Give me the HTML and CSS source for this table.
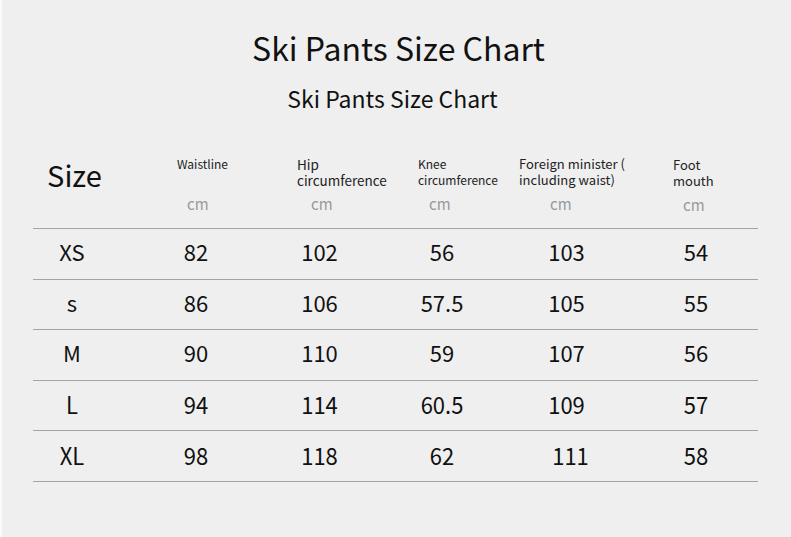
FILE: index.html
```html
<!DOCTYPE html>
<html>
<head>
<meta charset="utf-8">
<link rel="stylesheet" href="styles.css">
</head>
<body>
<div class="page">
  <h1 class="title">Ski Pants Size Chart</h1>
  <h2 class="subtitle">Ski Pants Size Chart</h2>
  <div class="chart">
    <div class="row head">
      <div class="cell size-head">Size</div>
      <div class="cell h h2"><div class="label"><span class="ln">Waistline</span></div><span class="unit">cm</span></div>
      <div class="cell h h3"><div class="label"><span class="ln">Hip</span><span class="ln">circumference</span></div><span class="unit">cm</span></div>
      <div class="cell h h4"><div class="label"><span class="ln">Knee</span><span class="ln">circumference</span></div><span class="unit">cm</span></div>
      <div class="cell h h5"><div class="label"><span class="ln">Foreign minister (</span><span class="ln">including waist)</span></div><span class="unit">cm</span></div>
      <div class="cell h h6"><div class="label"><span class="ln">Foot</span><span class="ln">mouth</span></div><span class="unit">cm</span></div>
    </div>
    <div class="row">
      <div class="cell sz">XS</div><div class="cell">82</div><div class="cell">102</div><div class="cell">56</div><div class="cell">103</div><div class="cell c6">54</div>
    </div>
    <div class="row">
      <div class="cell sz">s</div><div class="cell">86</div><div class="cell">106</div><div class="cell">57.5</div><div class="cell">105</div><div class="cell c6">55</div>
    </div>
    <div class="row">
      <div class="cell sz">M</div><div class="cell">90</div><div class="cell">110</div><div class="cell">59</div><div class="cell">107</div><div class="cell c6">56</div>
    </div>
    <div class="row narrow">
      <div class="cell sz">L</div><div class="cell">94</div><div class="cell">114</div><div class="cell">60.5</div><div class="cell">109</div><div class="cell c6">57</div>
    </div>
    <div class="row narrow">
      <div class="cell sz">XL</div><div class="cell">98</div><div class="cell">118</div><div class="cell">62</div><div class="cell c5">111</div><div class="cell c6">58</div>
    </div>
  </div>
</div>
</body>
</html>
```

FILE: styles.css
```css
html, body {
  margin: 0;
  padding: 0;
}
body {
  background: #efefef;
  width: 791px;
  height: 537px;
  overflow: hidden;
  font-family: "Noto Sans CJK SC", "Noto Sans", sans-serif;
  color: #111;
}
.page {
  border-left: 2px solid #fafafa;
  height: 537px;
  box-sizing: border-box;
  padding-top: 25px;
}
.title {
  margin: 0;
  text-align: center;
  font-weight: 400;
  font-size: 32px;
  line-height: 44px;
  padding-left: 4px;
}
.subtitle {
  margin: 14px 0 0;
  text-align: center;
  font-weight: 400;
  font-size: 23px;
  line-height: 30px;
  padding-right: 8px;
}
.chart {
  margin: 37px 0 0 31px;
  width: 725px;
}
.row {
  display: grid;
  grid-template-columns: 101px 124px 123px 122px 127px 128px;
  border-bottom: 1px solid #a3a3a3;
  height: 49.6px;
  align-items: center;
}
.row.head {
  height: 78px;
  align-items: start;
}
.cell {
  text-align: center;
  font-size: 22px;
  line-height: 30px;
  padding-bottom: 5px;
}
.sz {
  padding-right: 23px;
}
.c5 { padding-left: 8px; }
.c6 { padding-left: 4px; }
.narrow .cell {
  transform: scaleY(1.08);
}
.size-head {
  font-size: 29px;
  line-height: 36px;
  padding-top: 6px;
  padding-right: 18px;
}
.h {
  display: flex;
  flex-direction: column;
  text-align: left;
  padding-top: 6px;
}
.label {
  display: flex;
  flex-direction: column;
  font-size: 13px;
  height: 32px;
  color: #222;
  white-space: nowrap;
}
.ln {
  display: block;
  height: 16px;
  line-height: 16px;
}
.unit {
  font-size: 15px;
  line-height: 20px;
  color: #999;
  margin-top: 6px;
}
.h2 .label { padding-left: 43px; font-size: 12px; }
.h2 .unit { padding-left: 53px; }
.h3 .label { padding-left: 39px; font-size: 13.5px; }
.h3 .unit { padding-left: 53px; }
.h4 .label { padding-left: 37px; font-size: 12px; }
.h4 .unit { padding-left: 48px; }
.h5 .label { padding-left: 16px; }
.h5 .unit { padding-left: 47px; }
.h6 .label { padding-left: 43px; padding-top: 1px; }
.h6 .unit { padding-left: 53px; }
```
